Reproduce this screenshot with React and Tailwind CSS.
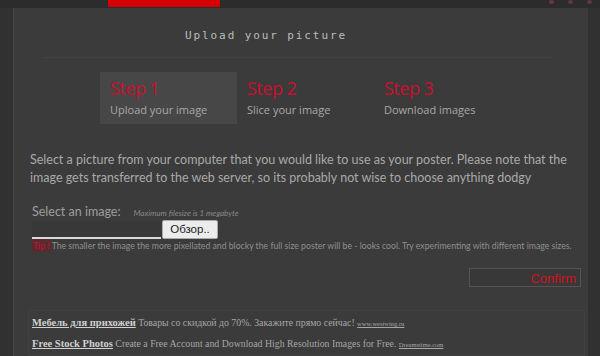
import React from "react";

const steps = [
  { title: "Step 1", text: "Upload your image", active: true },
  { title: "Step 2", text: "Slice your image" },
  { title: "Step 3", text: "Download images" },
];

export default function App() {
  return (
    <div className="h-[356px] overflow-hidden bg-[#313131] font-['Lato','Open_Sans',sans-serif]">
      {/* top strip */}
      <div className="relative h-2 bg-[#2c2c2c]">
        <div className="ml-[108px] h-[7px] w-[112px] bg-[#d40000]" />
        <div className="absolute right-[8px] top-0 flex gap-[14px]">
          <span className="h-[4px] w-[5px] rounded-full bg-[#6a3540]" />
          <span className="h-[4px] w-[5px] rounded-full bg-[#5a3a40]" />
          <span className="h-[4px] w-[5px] rounded-full bg-[#5a3a40]" />
        </div>
      </div>

      {/* main panel */}
      <div className="ml-[13px] mr-[12px] h-[348px] border-l border-[#474747] bg-[#3b3b3b] pr-[8px]">
        <h1 className="pr-[62px] pt-[20px] text-center font-['DejaVu_Sans_Mono',monospace] text-[11px] tracking-[1.9px] text-[#bbbbbb]">
          Upload your picture
        </h1>
        <div className="mx-[28px] mt-[12px] border-t border-[#424242]" />

        {/* steps */}
        <div className="ml-[86px] mt-[14px] flex">
          {steps.map((s) => (
            <div
              key={s.title}
              className={
                "h-[52px] w-[137px] pl-[10px] pt-[3px] " +
                (s.active ? "bg-[#474747]" : "")
              }
            >
              <div className="font-['Open_Sans',sans-serif] text-[18px] leading-[26px] tracking-[-0.5px] text-[#c8102e]">
                {s.title}
              </div>
              <div className="mt-[1px] font-['Open_Sans',sans-serif] text-[11px] text-[#a8a8a8]">
                {s.text}
              </div>
            </div>
          ))}
        </div>

        {/* description */}
        <p className="ml-[16px] mt-[27px] w-[545px] text-[12.5px] leading-[18px] text-[#a9a9a9]">
          Select a picture from your computer that you would like to use as your poster. Please note that the image gets transferred to the web server, so its probably not wise to choose anything dodgy
        </p>

        <div className="ml-[18px] mt-[16px] flex items-baseline">
          <span className="text-[12.5px] text-[#9e9e9e]">Select an image:</span>
          <span className="ml-[13px] text-[8px] italic text-[#8a8a8a]">Maximum filesize is 1 megabyte</span>
        </div>

        <div className="ml-[18px] mt-[-1px] flex items-end">
          <div className="h-[18px] w-[129px] border-b-2 border-[#d8d8d8] bg-[#383838]" />
          <button className="ml-[1px] h-[19px] w-[56px] rounded-[2px] border border-[#aaa] bg-[#ececec] font-['Liberation_Sans',sans-serif] text-[11.5px] text-[#222]">
            Обзор..
          </button>
        </div>

        <div className="ml-[18px] mt-[0px] flex items-center whitespace-nowrap text-[8.7px] text-[#8f8f8f]">
          <span className="mr-[1px] bg-[#5b2a30] px-[1px] text-[#c8102e]">Tip !</span>
          The smaller the image the more pixellated and blocky the full size poster will be - looks cool. Try experimenting with different image sizes.
        </div>

        <div className="mt-[16px] flex justify-end">
          <button className="mr-[-1px] h-[19px] w-[112px] border border-[#545454] bg-[#383838] pr-[4px] text-right font-['Liberation_Sans',sans-serif] text-[13px] text-[#d3101e]">
            Confirm
          </button>
        </div>

        {/* ads */}
        <div className="ml-[14px] mr-[-5px] mt-[23px] border border-[#404040] pl-[3px] pt-[2px] font-['Liberation_Serif',serif] text-[9.8px] text-[#a6a6a6]">
          <div className="leading-[20px]">
            <span className="text-[10.5px] font-bold text-[#d0d0d0] underline">Мебель для прихожей</span>{" "}
            Товары со скидкой до 70%. Закажите прямо сейчас!{" "}
            <span className="text-[6.5px] underline">www.westwing.ru</span>
          </div>
          <div className="leading-[20px]">
            <span className="text-[10.5px] font-bold text-[#d0d0d0] underline">Free Stock Photos</span>{" "}
            Create a Free Account and Download High Resolution Images for Free.{" "}
            <span className="text-[6.5px] underline">Dreamstime.com</span>
          </div>
        </div>
      </div>
    </div>
  );
}
